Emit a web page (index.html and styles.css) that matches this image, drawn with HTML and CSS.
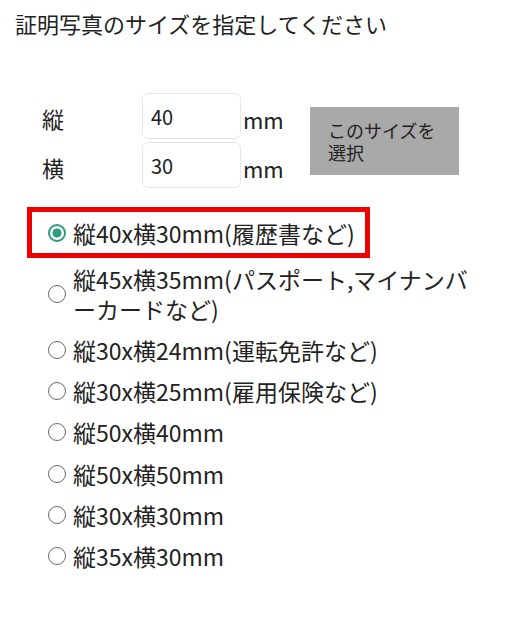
FILE: index.html
```html
<!DOCTYPE html>
<html lang="ja">
<head>
<meta charset="utf-8">
<title>証明写真のサイズ指定</title>
<link rel="stylesheet" href="styles.css">
</head>
<body>
<main class="page">
  <h1 class="title">証明写真のサイズを指定してください</h1>

  <form class="size-form">
    <label class="size-label" for="height">縦</label>
    <input class="size-input" id="height" type="text" value="40">
    <span class="unit">mm</span>
    <button class="select-btn" type="button">このサイズを選択</button>

    <label class="size-label" for="width">横</label>
    <input class="size-input" id="width" type="text" value="30">
    <span class="unit">mm</span>
  </form>

  <div class="presets">
    <label class="option is-checked">
      <span class="radio"></span>
      <span class="option-text">縦40x横30mm(履歴書など)</span>
    </label>
    <label class="option">
      <span class="radio"></span>
      <span class="option-text">縦45x横35mm(パスポート,マイナンバーカードなど)</span>
    </label>
    <label class="option">
      <span class="radio"></span>
      <span class="option-text">縦30x横24mm(運転免許など)</span>
    </label>
    <label class="option">
      <span class="radio"></span>
      <span class="option-text">縦30x横25mm(雇用保険など)</span>
    </label>
    <label class="option">
      <span class="radio"></span>
      <span class="option-text">縦50x横40mm</span>
    </label>
    <label class="option">
      <span class="radio"></span>
      <span class="option-text">縦50x横50mm</span>
    </label>
    <label class="option">
      <span class="radio"></span>
      <span class="option-text">縦30x横30mm</span>
    </label>
    <label class="option">
      <span class="radio"></span>
      <span class="option-text">縦35x横30mm</span>
    </label>
  </div>
</main>
</body>
</html>
```

FILE: styles.css
```css
* {
  box-sizing: border-box;
}

body {
  margin: 0;
  background: #ffffff;
  color: #222222;
  font-family: "Noto Sans CJK JP", "Noto Sans", sans-serif;
}

.page {
  padding: 8px 0 0 0;
}

.title {
  margin: 0 0 0 15px;
  font-size: 22px;
  font-weight: normal;
  line-height: 30px;
}

/* custom size entry */
.size-form {
  display: grid;
  grid-template-columns: 100px 99px 69px 149px;
  grid-template-rows: 46px 46px;
  row-gap: 3px;
  align-items: center;
  margin: 55px 0 0 42px;
  font-size: 22px;
}

.size-label {
  padding-top: 3px;
}

.size-input {
  width: 99px;
  height: 46px;
  padding: 0 0 0 8px;
  border: 1px solid #e6e6e6;
  border-radius: 6px;
  font-family: inherit;
  font-size: 20px;
  color: #222222;
  background: #ffffff;
  outline: none;
}

.unit {
  padding: 6px 0 0 2px;
}

.select-btn {
  grid-column: 4;
  grid-row: 1 / span 2;
  align-self: center;
  height: 68px;
  padding: 0 18px;
  border: 0;
  border-radius: 0;
  background: #a9a9a9;
  color: #222222;
  font-family: inherit;
  font-size: 18px;
  line-height: 22px;
  text-align: left;
}

/* preset list */
.presets {
  margin-top: 19px;
  display: flex;
  flex-direction: column;
  align-items: flex-start;
  font-size: 23px;
  line-break: loose;
}

.option {
  display: flex;
  align-items: center;
  gap: 7px;
  margin-left: 32px;
  padding: 5.6px 10px 5.6px 16px;
  line-height: 30px;
  max-width: 453px;
}

.option.is-checked {
  margin-left: 27px;
  border: 5px solid #ee0000;
}

.radio {
  flex: none;
  width: 18px;
  height: 18px;
  border: 1.6px solid #6a6a6a;
  border-radius: 50%;
}

.is-checked .radio {
  border: 2px solid #2e9b82;
  background: radial-gradient(circle, #2e9b82 0 4.2px, #ffffff 4.8px);
}
```
